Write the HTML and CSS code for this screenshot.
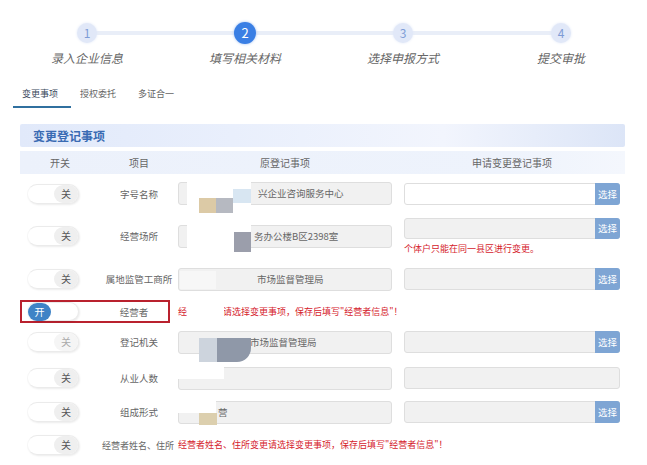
FILE: index.html
```html
<!DOCTYPE html>
<html lang="zh-CN">
<head>
    <meta charset="UTF-8">
    <meta name="viewport" content="width=device-width, initial-scale=1.0">
    <title>变更登记</title>
    <link rel="stylesheet" href="styles.css">
</head>
<body>
    <div class="steps">
        <div class="step"><span class="num">1</span><span class="label">录入企业信息</span></div>
        <div class="step active"><span class="num">2</span><span class="label">填写相关材料</span></div>
        <div class="step"><span class="num">3</span><span class="label">选择申报方式</span></div>
        <div class="step"><span class="num">4</span><span class="label">提交审批</span></div>
    </div>

    <div class="tabs">
        <div class="tab active">变更事项</div>
        <div class="tab">授权委托</div>
        <div class="tab">多证合一</div>
    </div>

    <div class="section">
        <div class="section-title">变更登记事项</div>
        <div class="thead">
            <div>开关</div>
            <div>项目</div>
            <div>原登记事项</div>
            <div class="new">申请变更登记事项</div>
        </div>

        <div class="row r1">
            <div class="sw"><div class="toggle"><span class="knob">关</span></div></div>
            <div class="item">字号名称</div>
            <div class="orig"><div class="field pad80">兴企业咨询服务中心
                <i class="mask m1"></i><i class="blot b1a"></i><i class="blot b1b"></i><i class="blot b1c"></i>
            </div></div>
            <div class="new"><div class="pick white"><span class="btn">选择</span></div></div>
        </div>

        <div class="row r2">
            <div class="sw"><div class="toggle"><span class="knob">关</span></div></div>
            <div class="item">经营场所</div>
            <div class="orig"><div class="field pad76">务办公楼B区2398室
                <i class="mask m2"></i><i class="blot b2"></i>
            </div></div>
            <div class="new">
                <div class="pick"><span class="btn">选择</span></div>
                <div class="msg">个体户只能在同一县区进行变更。</div>
            </div>
        </div>

        <div class="row r3">
            <div class="sw"><div class="toggle"><span class="knob">关</span></div></div>
            <div class="item">属地监管工商所</div>
            <div class="orig"><div class="field pad79">市场监督管理局
                <i class="mask m3"></i>
            </div></div>
            <div class="new"><div class="pick"><span class="btn">选择</span></div></div>
        </div>

        <div class="row r4">
            <div class="highlight">
                <div class="sw"><div class="toggle on"><span class="knob">开</span></div></div>
                <div class="item">经营者</div>
            </div>
            <div class="msg wide">经营者变更请选择变更事项，保存后填写"经营者信息"！
                <i class="mask m4"></i>
            </div>
        </div>

        <div class="row r5">
            <div class="sw"><div class="toggle faint"><span class="knob">关</span></div></div>
            <div class="item">登记机关</div>
            <div class="orig"><div class="field pad72">市场监督管理局
                <i class="blot b5a"></i><i class="blot b5b"></i>
            </div></div>
            <div class="new"><div class="pick"><span class="btn">选择</span></div></div>
        </div>

        <div class="row r6">
            <div class="sw"><div class="toggle"><span class="knob">关</span></div></div>
            <div class="item">从业人数</div>
            <div class="orig"><div class="field">
                <i class="mask m6"></i>
            </div></div>
            <div class="new"><div class="pick"></div></div>
        </div>

        <div class="row r7">
            <div class="sw"><div class="toggle"><span class="knob">关</span></div></div>
            <div class="item">组成形式</div>
            <div class="orig"><div class="field pad40">营
                <i class="mask m7"></i><i class="blot b7"></i>
            </div></div>
            <div class="new"><div class="pick"><span class="btn">选择</span></div></div>
        </div>

        <div class="row r8">
            <div class="sw"><div class="toggle"><span class="knob">关</span></div></div>
            <div class="item small">经营者姓名、住所</div>
            <div class="msg wide">经营者姓名、住所变更请选择变更事项，保存后填写"经营者信息"！</div>
        </div>
    </div>
</body>
</html>
```

FILE: styles.css
```css
body {
    margin: 0;
    width: 647px;
    height: 465px;
    overflow: hidden;
    background: #fff;
    color: #555;
    font-family: "Noto Sans CJK SC", "Noto Sans", sans-serif;
}

/* steps */
.steps {
    position: relative;
    display: grid;
    grid-template-columns: repeat(4, 158px);
    padding: 23px 0 0 8px;
}
.steps::before {
    content: "";
    position: absolute;
    left: 87px;
    width: 474px;
    top: 31px;
    height: 4px;
    background: #e9eef8;
}
.step {
    position: relative;
    display: flex;
    flex-direction: column;
    align-items: center;
}
.num {
    width: 20px;
    height: 20px;
    border-radius: 50%;
    background: #e1e8f8;
    box-shadow: 0 0 3px #e1e8f8;
    color: #7e9cd6;
    font-size: 12px;
    line-height: 20px;
    text-align: center;
}
.step.active .num {
    width: 22px;
    height: 22px;
    margin: -1px 0;
    line-height: 22px;
    background: #3a7fe4;
    box-shadow: 0 0 3px #9dbdf0;
    color: #fff;
    font-size: 13px;
}
.label {
    margin-top: 7px;
    font-size: 12px;
    line-height: 16px;
    font-style: italic;
    color: #666;
}

/* tabs */
.tabs {
    display: flex;
    margin: 21px 0 0 13px;
}
.tab {
    padding: 0 13px 5px 9px;
    font-size: 9px;
    line-height: 14px;
    color: #666;
    border-bottom: 2px solid transparent;
}
.tab.active {
    color: #3b4a5c;
    border-bottom-color: #30709f;
}

/* section */
.section {
    width: 605px;
    margin: 16px 0 0 20px;
}
.section-title {
    height: 23px;
    line-height: 23px;
    padding-left: 13px;
    font-size: 12px;
    font-weight: bold;
    color: #3a6bb3;
    background: linear-gradient(90deg, #e1e9fa 0%, #e9effc 35%, #f2f5fd 70%, #dce5f7 100%);
    border-radius: 2px;
}
.thead {
    display: grid;
    grid-template-columns: 80px 78px 214px 228px;
    align-items: center;
    height: 23px;
    margin-top: 4px;
    background: linear-gradient(90deg, #ecf1fb 0%, #eef3fc 80%, #f4f7fd 100%);
    font-size: 10px;
    color: #666;
    text-align: center;
}
.thead .new {
    padding-left: 12px;
}

.row {
    display: grid;
    grid-template-columns: 80px 78px 214px 228px;
    align-items: center;
}
.r1 { height: 39px; }
.r2 { height: 46px; }
.r3 { height: 40px; }
.r4 { height: 25px; }
.r5 { height: 36px; }
.r6 { height: 36px; }
.r7 { height: 32px; }
.r8 { height: 34px; }

.sw {
    padding-left: 7px;
}
.toggle {
    display: flex;
    justify-content: flex-end;
    width: 50px;
    height: 18px;
    border: 1px solid #ebebeb;
    border-left-color: #f6f6f6;
    border-radius: 10px;
    box-shadow: 1px 1px 2px rgba(0, 0, 0, 0.08);
    background: #fff;
}
.knob {
    width: 24px;
    height: 18px;
    border-radius: 9px;
    background: #efefef;
    font-size: 10px;
    line-height: 18px;
    text-align: center;
    color: #555;
}
.toggle.faint .knob {
    color: #aaa;
    background: #f5f5f5;
}
.toggle.on {
    justify-content: flex-start;
}
.toggle.on .knob {
    width: 23px;
    background: #3f83c6;
    color: #fff;
}

.item {
    text-align: center;
    font-size: 9.5px;
    color: #666;
    white-space: nowrap;
}
.item.small {
    font-size: 9px;
    text-align: left;
    padding-left: 2px;
}

.orig {
    position: relative;
}
.field {
    position: relative;
    box-sizing: border-box;
    height: 23px;
    line-height: 21px;
    border: 1px solid #dedede;
    border-radius: 3px;
    background: #f1f1f1;
    font-size: 9.5px;
    color: #666;
    white-space: nowrap;
}
.pad80 { padding-left: 79px; }
.pad79 { padding-left: 78px; }
.pad76 { padding-left: 75px; }
.pad72 { padding-left: 71px; }
.pad40 { padding-left: 39px; }

.new {
    padding-left: 12px;
}
.pick {
    display: flex;
    justify-content: flex-end;
    box-sizing: border-box;
    height: 22px;
    border: 1px solid #dedede;
    border-radius: 3px;
    background: #f1f1f1;
}
.pick.white {
    background: #fff;
}
.r2 .pick {
    height: 21px;
}
.btn {
    display: flex;
    align-items: center;
    justify-content: center;
    width: 25px;
    margin: -1px -1px -1px 0;
    border-radius: 0 3px 3px 0;
    background: #7ea5d4;
    color: #fff;
    font-size: 9.5px;
}
.msg {
    margin-top: 4px;
    font-size: 9px;
    line-height: 12px;
    color: #d5222c;
    white-space: nowrap;
}
.msg.wide {
    position: relative;
    grid-column: 3 / 5;
    margin-top: 0;
}

.highlight {
    grid-column: 1 / 3;
    display: grid;
    grid-template-columns: 78px 68px;
    align-items: center;
    box-sizing: border-box;
    width: 150px;
    height: 23px;
    border: 2px solid #b9212e;
}
.highlight .sw {
    padding-left: 5px;
}
.highlight .toggle {
    height: 17px;
}

/* redacted parts of the screenshot */
.mask {
    position: absolute;
    background: #fff;
}
.blot {
    position: absolute;
}
.m1 { left: 8px; top: -3px; width: 64px; height: 35px; }
.b1a { left: 20px; top: 15px; width: 17px; height: 15px; background: #dccaa6; }
.b1b { left: 37px; top: 15px; width: 17px; height: 15px; background: #b6b9c1; }
.b1c { left: 54px; top: 6px; width: 18px; height: 14px; background: #d8e6f2; }
.m2 { left: 8px; top: -3px; width: 64px; height: 32px; }
.b2 { left: 55px; top: 6px; width: 17px; height: 20px; background: #9b9eab; }
.m3 { left: 1px; top: 2px; width: 36px; height: 18px; background: #f7f7f7; }
.m4 { left: 9px; top: -1px; width: 37px; height: 14px; }
.b5a { left: 20px; top: 6px; width: 20px; height: 24px; background: #cdd4dd; }
.b5b { left: 38px; top: 6px; width: 34px; height: 24px; background: #8f98a8; border-radius: 0 0 14px 0; }
.m6 { left: -1px; top: -2px; width: 46px; height: 13px; }
.m7 { left: -1px; top: -1px; width: 38px; height: 12px; }
.b7 { left: 20px; top: 11px; width: 18px; height: 12px; background: #dccfae; }
```
